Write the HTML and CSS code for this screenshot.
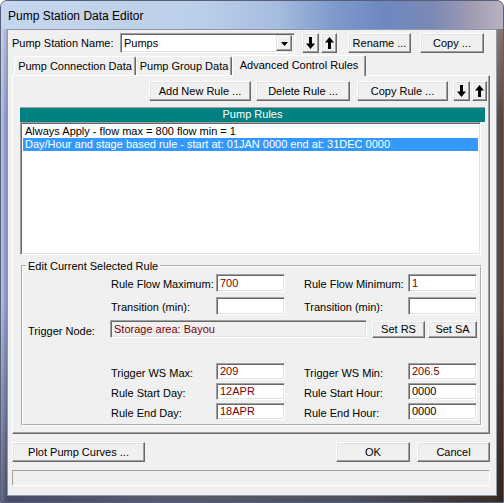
FILE: index.html
```html
<!DOCTYPE html>
<html>
<head>
<meta charset="utf-8">
<title>Pump Station Data Editor</title>
<link rel="stylesheet" href="styles.css">
</head>
<body>
<div class="window">
  <div class="titlebar"><span class="title">Pump Station Data Editor</span></div>
  <div class="client">
    <div class="toprow">
      <span class="name-lbl">Pump Station Name:</span>
      <div class="combo">
        <span class="combo-text">Pumps</span>
        <span class="combo-btn"><svg width="7" height="4" viewBox="0 0 7 4"><path d="M0 0h7L3.5 4z"/></svg></span>
      </div>
      <button class="btn arrow dn"><svg width="9" height="12" viewBox="0 0 9 12"><path d="M3 0h3v6.5h3L4.5 12 0 6.5h3z"/></svg></button>
      <button class="btn arrow up"><svg width="9" height="12" viewBox="0 0 9 12"><path d="M4.5 0L9 5.5H6V12H3V5.5H0z"/></svg></button>
      <button class="btn rename">Rename ...</button>
      <button class="btn copy">Copy ...</button>
    </div>
    <div class="tabs">
      <div class="tab t1">Pump Connection Data</div>
      <div class="tab t2">Pump Group Data</div>
      <div class="tab t3 active">Advanced Control Rules</div>
    </div>
    <div class="panel">
      <div class="rulebtns">
        <button class="btn b-add">Add New Rule ...</button>
        <button class="btn b-del">Delete Rule ...</button>
        <button class="btn b-copy">Copy Rule ...</button>
        <button class="btn arrow dn2"><svg width="9" height="12" viewBox="0 0 9 12"><path d="M3 0h3v6.5h3L4.5 12 0 6.5h3z"/></svg></button>
        <button class="btn arrow up2"><svg width="9" height="12" viewBox="0 0 9 12"><path d="M4.5 0L9 5.5H6V12H3V5.5H0z"/></svg></button>
      </div>
      <div class="rules-header">Pump Rules</div>
      <div class="rules-list">
        <div class="item">Always Apply - flow max = 800 flow min = 1</div>
        <div class="item sel">Day/Hour and stage based rule - start at: 01JAN 0000 end at: 31DEC 0000</div>
      </div>
      <fieldset class="group">
        <legend>Edit Current Selected Rule</legend>
        <div class="row ra">
          <span class="col1"></span>
          <span class="lbl">Rule Flow Maximum:</span>
          <span class="field red">700</span>
          <span class="lbl lbl2">Rule Flow Minimum:</span>
          <span class="field red">1</span>
        </div>
        <div class="row rb">
          <span class="col1"></span>
          <span class="lbl">Transition (min):</span>
          <span class="field"></span>
          <span class="lbl lbl2">Transition (min):</span>
          <span class="field"></span>
        </div>
        <div class="row rc">
          <span class="col1 node-lbl">Trigger Node:</span>
          <span class="field node red">Storage area: Bayou</span>
          <button class="btn b-rs">Set RS</button>
          <button class="btn b-sa">Set SA</button>
        </div>
        <div class="row rd">
          <span class="col1"></span>
          <span class="lbl">Trigger WS Max:</span>
          <span class="field red">209</span>
          <span class="lbl lbl2">Trigger WS Min:</span>
          <span class="field red">206.5</span>
        </div>
        <div class="row re">
          <span class="col1"></span>
          <span class="lbl">Rule Start Day:</span>
          <span class="field red">12APR</span>
          <span class="lbl lbl2">Rule Start Hour:</span>
          <span class="field">0000</span>
        </div>
        <div class="row rf">
          <span class="col1"></span>
          <span class="lbl">Rule End Day:</span>
          <span class="field red">18APR</span>
          <span class="lbl lbl2">Rule End Hour:</span>
          <span class="field">0000</span>
        </div>
      </fieldset>
    </div>
    <div class="bottomrow">
      <button class="btn b-plot">Plot Pump Curves ...</button>
      <button class="btn b-ok">OK</button>
      <button class="btn b-cancel">Cancel</button>
    </div>
    <div class="status"></div>
  </div>
</div>
</body>
</html>
```

FILE: styles.css
```css
* { box-sizing: border-box; }
html, body { margin: 0; padding: 0; }
body {
  width: 504px;
  height: 503px;
  overflow: hidden;
  font-family: "Liberation Sans", Arial, sans-serif;
  font-size: 11px;
  color: #000;
  background: #fff;
}
.window {
  width: 504px;
  height: 503px;
  border: 1px solid #56607a;
  border-radius: 7px 7px 0 0;
  display: flex;
  flex-direction: column;
  overflow: hidden;
  background:
    linear-gradient(180deg, rgba(255,255,255,0.35) 0, rgba(255,255,255,0) 120px, rgba(0,0,0,0) 300px, rgba(0,0,0,0.45) 100%),
    linear-gradient(90deg, #b9c9e4 0, #7f86b8 6px, #9ca4c8 30%, #8a90b0 70%, #6a5448 98%, #5a4032 100%);
}
.titlebar {
  height: 28px;
  flex: 0 0 28px;
  padding-left: 7px;
  display: flex;
  align-items: center;
  background: linear-gradient(90deg, #c6d6ec 0%, #bccfe9 40%, #a6bce0 55%, #7f9bcc 66%, #6d88c0 76%, #7c88b4 86%, #a29cb2 94%, #b9b2bf 100%);
}
.title {
  font-size: 12px;
  color: #000;
  margin-top: 2px;
}
.client {
  flex: 1 1 auto;
  margin: 0 6px 6px 6px;
  background: #f0f0f0;
  border: 1px solid #8c98ae;
  display: flex;
  flex-direction: column;
  padding: 3px 6px 0 4px;
}

/* buttons */
.btn {
  font: inherit;
  color: #000;
  background: #f0f0f0;
  border: 1px solid;
  border-color: #fff #696969 #696969 #fff;
  box-shadow: inset -1px -1px #a0a0a0, inset 1px 1px #e3e3e3;
  padding: 0;
  margin: 0;
  height: 20px;
  display: flex;
  align-items: center;
  justify-content: center;
  flex: 0 0 auto;
}
.arrow svg { display: block; fill: #000; }

/* top row */
.toprow {
  display: flex;
  align-items: center;
  height: 20px;
}
.name-lbl { width: 108px; flex: 0 0 108px; }
.combo {
  width: 175px;
  height: 20px;
  background: #fff;
  border: 1px solid;
  border-color: #a0a0a0 #fff #fff #a0a0a0;
  box-shadow: inset 1px 1px #696969, inset -1px -1px #e3e3e3;
  display: flex;
  align-items: center;
  padding: 2px 2px 2px 3px;
}
.combo-text { flex: 1 1 auto; }
.combo-btn {
  width: 16px;
  height: 16px;
  background: #f0f0f0;
  border: 1px solid;
  border-color: #e3e3e3 #696969 #696969 #e3e3e3;
  box-shadow: inset -1px -1px #a0a0a0, inset 1px 1px #fff;
  display: flex;
  align-items: center;
  justify-content: center;
}
.combo-btn svg { fill: #000; display: block; margin-top: 1px; }
.dn { margin-left: 7px; width: 17px; }
.up { margin-left: 2px; width: 16px; }
.rename { margin-left: 11px; width: 63px; }
.copy { margin-left: 9px; width: 64px; }

/* tabs */
.tabs {
  display: flex;
  align-items: flex-end;
  height: 21px;
  margin-top: 2px;
  margin-left: 2px;
  margin-bottom: -1px;
  position: relative;
  z-index: 2;
}
.tab {
  height: 19px;
  background: #f0f0f0;
  border-top: 1px solid #fff;
  border-left: 1px solid #fff;
  border-right: 1px solid #696969;
  box-shadow: inset -1px 0 #a0a0a0;
  border-radius: 2px 2px 0 0;
  display: flex;
  align-items: center;
  justify-content: center;
  margin-bottom: 1px;
}
.t1 { width: 122px; }
.t2 { width: 96px; }
.t3 { width: 134px; }
.tab.active {
  height: 21px;
  margin-bottom: 0;
  padding-bottom: 2px;
}

/* panel */
.panel {
  width: 478px;
  height: 359px;
  border: 1px solid;
  border-color: #fff #696969 #696969 #fff;
  box-shadow: inset -1px -1px #a0a0a0;
  display: flex;
  flex-direction: column;
  position: relative;
  z-index: 1;
}
.rulebtns {
  display: flex;
  justify-content: flex-end;
  margin-top: 5px;
  padding-right: 2px;
}
.b-add { width: 102px; }
.b-del { margin-left: 5px; width: 94px; }
.b-copy { margin-left: 7px; width: 91px; }
.dn2 { margin-left: 5px; width: 17px; }
.up2 { margin-left: 2px; width: 15px; }

.rules-header {
  margin-top: 6px;
  margin-left: 7px;
  width: 465px;
  height: 15px;
  background: #008080;
  border-top: 1px solid #a0a0a0;
  color: #fff;
  text-align: center;
  line-height: 13px;
}
.rules-list {
  margin-left: 7px;
  width: 461px;
  height: 133px;
  background: #fff;
  border: 1px solid;
  border-color: #a0a0a0 #fff #fff #a0a0a0;
  box-shadow: inset 1px 1px #696969, inset -1px -1px #e3e3e3;
  padding: 2px 2px 0 2px;
}
.item {
  height: 13px;
  line-height: 13px;
  padding-left: 2px;
  white-space: nowrap;
  overflow: hidden;
}
.item.sel { background: #3399ff; color: #fff; }

/* group */
.group {
  margin: 4px 0 0 8px;
  padding: 1px 0 4px 0;
  width: 461px;
  border: 2px groove #fff;
  min-width: 0;
}
.group legend {
  padding: 0 2px;
  margin-left: 3px;
  line-height: 14px;
}
.row {
  display: flex;
  align-items: center;
}
.col1 { width: 87px; flex: 0 0 87px; padding-left: 5px; }
.lbl { width: 106px; flex: 0 0 106px; padding-left: 1px; padding-top: 2px; }
.lbl2 { margin-left: 18px; width: 105px; flex-basis: 105px; }
.field {
  width: 69px;
  height: 18px;
  flex: 0 0 auto;
  background: #fff;
  border: 1px solid;
  border-color: #a0a0a0 #fff #fff #a0a0a0;
  box-shadow: inset 1px 1px #696969, inset -1px -1px #e3e3e3;
  padding: 0 3px;
  line-height: 16px;
  white-space: nowrap;
}
.red { color: #800000; }
.rb, .rc { margin-top: 5px; }
.rc .field.node { width: 257px; background: #f0f0f0; }
.node-lbl { padding-top: 4px; }
.b-rs { margin-left: 5px; width: 53px; height: 17px; }
.b-sa { margin-left: 3px; width: 49px; height: 17px; }
.rd { margin-top: 25px; }
.rd .field, .re .field, .rf .field { height: 17px; line-height: 15px; }
.re, .rf { margin-top: 3px; }

/* bottom */
.bottomrow {
  display: flex;
  margin-top: 8px;
  height: 20px;
}
.b-plot { width: 133px; }
.b-ok { margin-left: auto; width: 74px; }
.b-cancel { margin-left: 7px; width: 73px; }
.status {
  margin-top: 8px;
  width: 478px;
  height: 16px;
  border: 1px solid;
  border-color: #a0a0a0 #fff #fff #a0a0a0;
}
```
